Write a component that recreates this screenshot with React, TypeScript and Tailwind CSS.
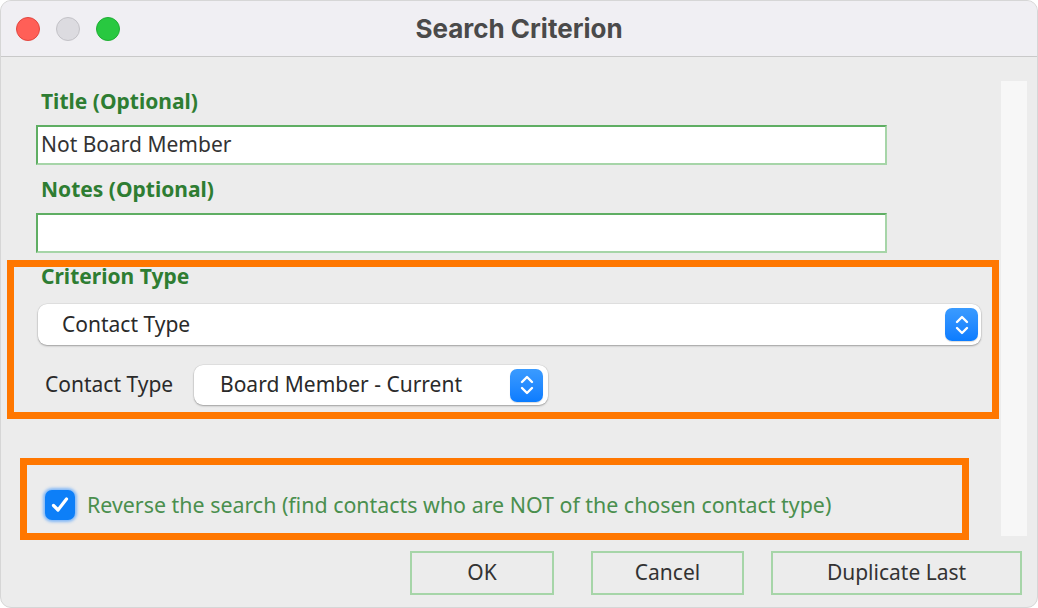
import React from "react";

const font = { fontFamily: '"Noto Sans", "Open Sans", sans-serif' };

function Stepper() {
  return (
    <div className="flex h-[33px] w-[33px] items-center justify-center rounded-[7px] bg-gradient-to-b from-[#3a9bff] to-[#0a7cff] shadow-[0_1px_1px_rgba(0,0,0,0.15)]">
      <svg width="16" height="24" viewBox="0 0 16 24" fill="none" stroke="white" strokeWidth="2.4" strokeLinecap="round" strokeLinejoin="round">
        <path d="M3 9 L8 4 L13 9" />
        <path d="M3 15 L8 20 L13 15" />
      </svg>
    </div>
  );
}

export default function App() {
  return (
    <div className="h-[608px] w-[1038px] bg-white" style={font}>
      <div className="flex h-[608px] w-[1038px] flex-col overflow-hidden rounded-[11px] border border-[#d6d6d6] bg-[#ececec]">
        {/* Title bar */}
        <div className="relative flex h-[56px] shrink-0 items-center border-b border-[#c9c9c9] bg-[#f0eff3]">
          <div className="ml-[15px] flex items-center gap-[16px]">
            <div className="h-[24px] w-[24px] rounded-full border border-[#e2463f] bg-[#ff5f57]" />
            <div className="h-[24px] w-[24px] rounded-full border border-[#c3c2c7] bg-[#dcdbe0]" />
            <div className="h-[24px] w-[24px] rounded-full border border-[#1fae34] bg-[#28c840]" />
          </div>
          <div
            className="absolute inset-x-0 top-0 flex h-[55px] items-center justify-center text-[26px] font-bold text-[#4a4a4a]"
            style={{ fontFamily: 'Inter, "Liberation Sans", sans-serif' }}
          >
            Search Criterion
          </div>
        </div>

        {/* Body */}
        <div className="flex">
          <div className="flex w-[1000px] flex-col">
            <div className="ml-[40px] mt-[32px] h-[24px] text-[21px] font-bold leading-[24px] text-[#2e7d32]">
              Title (Optional)
            </div>
            <div className="ml-[35px] mt-[12px] flex h-[40px] w-[851px] items-center border-2 border-[#a6d5a8] border-l-[#5fae63] border-t-[#5fae63] bg-white pl-[3px] text-[21px] text-[#333]">
              Not Board Member
            </div>
            <div className="ml-[40px] mt-[12px] h-[24px] text-[21px] font-bold leading-[24px] text-[#2e7d32]">
              Notes (Optional)
            </div>
            <div className="ml-[35px] mt-[12px] h-[40px] w-[851px] border-2 border-[#a6d5a8] border-l-[#5fae63] border-t-[#5fae63] bg-white" />

            {/* Orange box 1 */}
            <div className="ml-[6px] mt-[7px] flex h-[159px] w-[992px] flex-col border-[7px] border-[#ff7700]">
              <div className="ml-[27px] mt-[-2px] h-[22px] text-[21px] font-bold leading-[22px] text-[#2e7d32]">
                Criterion Type
              </div>
              <div className="ml-[24px] mt-[17px] flex h-[41px] w-[943px] items-center justify-between rounded-[9px] bg-white pl-[24px] pr-[3px] text-[21px] text-[#2a2a2a] shadow-[0_1px_2px_rgba(0,0,0,0.3),0_0_0_0.5px_rgba(0,0,0,0.08)]">
                <span>Contact Type</span>
                <Stepper />
              </div>
              <div className="mt-[20px] flex items-center">
                <span className="ml-[31px] w-[149px] text-[21px] text-[#2a2a2a]">Contact Type</span>
                <div className="flex h-[40px] w-[354px] items-center justify-between rounded-[9px] bg-white pl-[26px] pr-[5px] text-[21px] text-[#2a2a2a] shadow-[0_1px_2px_rgba(0,0,0,0.3),0_0_0_0.5px_rgba(0,0,0,0.08)]">
                  <span>Board Member - Current</span>
                  <Stepper />
                </div>
              </div>
            </div>

            {/* Orange box 2 */}
            <div className="ml-[19px] mt-[39px] flex h-[82px] w-[949px] items-center border-[7px] border-[#ff7700] pt-[12px]">
              <div className="ml-[18px] flex h-[30px] w-[30px] items-center justify-center rounded-[7px] bg-[#0d7ff8] shadow-[0_0_3px_2px_rgba(60,150,255,0.6)]">
                <svg width="22" height="22" viewBox="0 0 22 22" fill="none" stroke="white" strokeWidth="3.2" strokeLinecap="round" strokeLinejoin="round">
                  <path d="M4.5 11.5 L9 16 L17.5 5" />
                </svg>
              </div>
              <span className="ml-[12px] text-[21.4px] text-[#4a8f4e]">
                Reverse the search (find contacts who are NOT of the chosen contact type)
              </span>
            </div>
          </div>
          <div className="mt-[24px] h-[455px] w-[26px] bg-[#f7f7f7]" />
        </div>

        {/* Buttons */}
        <div className="mt-[11px] flex">
          <button className="ml-[409px] flex h-[44px] w-[144px] items-center justify-center border-2 border-[#a6d5a8] text-[21px] text-[#333]">
            OK
          </button>
          <button className="ml-[37px] flex h-[44px] w-[153px] items-center justify-center border-2 border-[#a6d5a8] text-[21px] text-[#333]">
            Cancel
          </button>
          <button className="ml-[27px] flex h-[44px] w-[251px] items-center justify-center border-2 border-[#a6d5a8] text-[21px] text-[#333]">
            Duplicate Last
          </button>
        </div>
      </div>
    </div>
  );
}
